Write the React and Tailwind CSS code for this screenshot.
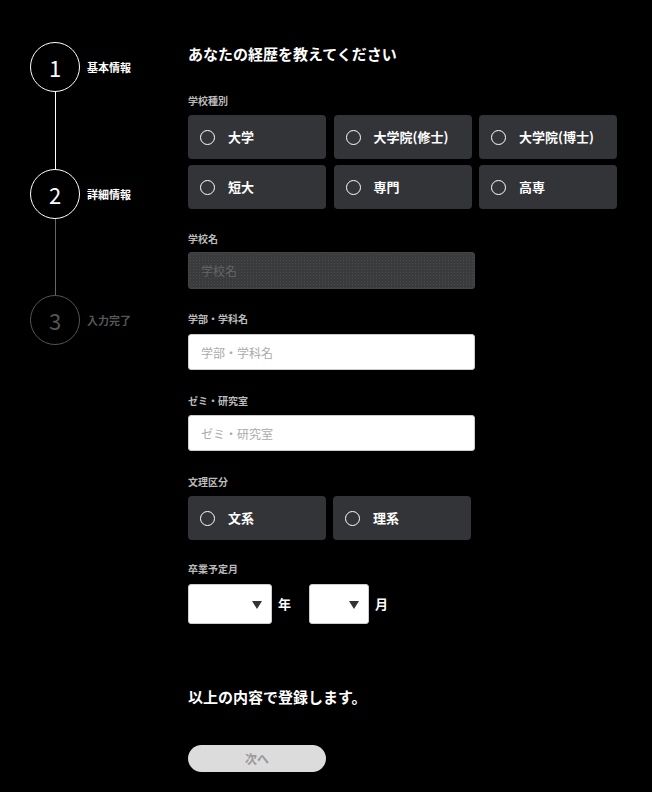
import { useState } from 'react';

const font = { fontFamily: '"Noto Sans CJK JP", "Noto Sans", sans-serif' };

function Step({ num, label, active }) {
  return (
    <div className="flex items-center">
      <div
        className={`w-[50px] h-[50px] rounded-full border flex items-center justify-center text-[22px] ${
          active ? 'border-white text-white' : 'border-[#555] text-[#555]'
        }`}
      >
        {num}
      </div>
      <span className={`ml-[7px] text-[11px] font-bold ${active ? 'text-white' : 'text-[#555]'}`}>{label}</span>
    </div>
  );
}

function Radio({ label, checked, onClick }) {
  return (
    <button
      type="button"
      onClick={onClick}
      className="w-[138px] h-[44px] rounded-[4px] bg-[#323438] flex items-center pl-[12px] text-left"
    >
      <span className="w-[15px] h-[15px] rounded-full border-[1.5px] border-white flex items-center justify-center shrink-0">
        {checked && <span className="w-[7px] h-[7px] rounded-full bg-white" />}
      </span>
      <span className="ml-[13px] text-[13px] font-bold text-white">{label}</span>
    </button>
  );
}

function Label({ children, className = '' }) {
  return <div className={`text-[10px] leading-[14px] font-bold text-[#bbb] ${className}`}>{children}</div>;
}

function Select({ width, unit }) {
  return (
    <div className="flex items-center">
      <div className={`${width} h-[40px] bg-white rounded-[3px] border border-[#ccc] relative`}>
        <span className="absolute right-[9px] top-[16px] w-0 h-0 border-l-[5.5px] border-r-[5.5px] border-t-[8px] border-l-transparent border-r-transparent border-t-[#333]" />
      </div>
      <span className="ml-[6px] text-[13px] font-bold text-white">{unit}</span>
    </div>
  );
}

export default function App() {
  const [school, setSchool] = useState('');
  const [kubun, setKubun] = useState('');

  const schools = ['大学', '大学院(修士)', '大学院(博士)', '短大', '専門', '高専'];

  return (
    <div className="min-h-[792px] bg-black flex" style={font}>
      {/* ステップ */}
      <div className="w-[188px] shrink-0 pl-[30px] pt-[42px]">
        <Step num="1" label="基本情報" active />
        <div className="w-px h-[77px] bg-white ml-[24.5px]" />
        <Step num="2" label="詳細情報" active />
        <div className="w-px h-[76px] bg-[#666] ml-[24.5px]" />
        <Step num="3" label="入力完了" />
      </div>

      {/* フォーム */}
      <div className="pt-[43px] flex-1">
        <h1 className="text-[15px] leading-[22px] font-bold text-white">あなたの経歴を教えてください</h1>

        <Label className="mt-[29px]">学校種別</Label>
        <div className="mt-[7px] grid grid-cols-[138px_138px_138px] gap-x-[7.5px] gap-y-[6px]">
          {schools.map((s) => (
            <Radio key={s} label={s} checked={school === s} onClick={() => setSchool(s)} />
          ))}
        </div>

        <Label className="mt-[23px]">学校名</Label>
        <input
          disabled
          placeholder="学校名"
          className="mt-[6px] block w-[287px] h-[37px] rounded-[3px] bg-[#3a3b3d] bg-[radial-gradient(#4a4b4e_0.6px,transparent_0.6px)] bg-[length:3px_3px] border border-[#444] px-[12px] text-[12px] placeholder:text-[#666]"
        />

        <Label className="mt-[23px]">学部・学科名</Label>
        <input
          placeholder="学部・学科名"
          className="mt-[8px] block w-[287px] h-[36px] rounded-[3px] bg-white border border-[#ccc] px-[12px] text-[12px] placeholder:text-[#aaa]"
        />

        <Label className="mt-[24px]">ゼミ・研究室</Label>
        <input
          placeholder="ゼミ・研究室"
          className="mt-[7px] block w-[287px] h-[36px] rounded-[3px] bg-white border border-[#ccc] px-[12px] text-[12px] placeholder:text-[#aaa]"
        />

        <Label className="mt-[24px]">文理区分</Label>
        <div className="mt-[7px] flex gap-[7px]">
          {['文系', '理系'].map((s) => (
            <Radio key={s} label={s} checked={kubun === s} onClick={() => setKubun(s)} />
          ))}
        </div>

        <Label className="mt-[22px]">卒業予定月</Label>
        <div className="mt-[8px] flex gap-[18px]">
          <Select width="w-[84px]" unit="年" />
          <Select width="w-[60px]" unit="月" />
        </div>

        <p className="mt-[62px] text-[15px] leading-[22px] font-bold text-white">以上の内容で登録します。</p>

        <button
          type="button"
          disabled
          className="mt-[37px] w-[138px] h-[27px] rounded-full bg-[#dcdcdc] text-[12px] font-bold text-[#999]"
        >
          次へ
        </button>
      </div>
    </div>
  );
}
